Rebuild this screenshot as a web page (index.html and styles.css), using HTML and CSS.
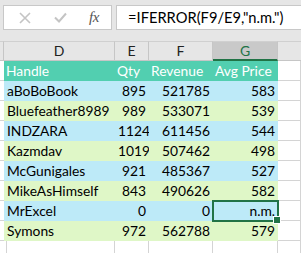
FILE: index.html
```html
<!DOCTYPE html>
<html>
<head>
<meta charset="utf-8">
<link rel="stylesheet" href="styles.css">
</head>
<body>
<div class="fbar">
  <div class="tools">
    <svg class="ico" width="12" height="12" viewBox="0 0 12 12"><path d="M1 1 L11 11 M11 1 L1 11" stroke="#c4c4c4" stroke-width="1.6" fill="none"/></svg>
    <svg class="ico" width="13" height="11" viewBox="0 0 13 11"><path d="M1 5.5 L5 9.5 L12 1.5" stroke="#c4c4c4" stroke-width="2" fill="none"/></svg>
    <span class="fx">fx</span>
  </div>
  <div class="formula">=IFERROR(F9/E9,"n.m.")</div>
</div>
<div class="sheet">
  <div class="ch edge"></div><div class="ch">D</div><div class="ch">E</div><div class="ch">F</div><div class="ch sel">G</div><div class="ch last"></div>

  <div class="c edge"></div><div class="c th">Handle</div><div class="c th">Qty</div><div class="c th">Revenue</div><div class="c th">Avg Price</div><div class="c"></div>

  <div class="c edge"></div><div class="c b">aBoBoBook</div><div class="c b n">895</div><div class="c b n">521785</div><div class="c b n">583</div><div class="c"></div>
  <div class="c edge"></div><div class="c g">Bluefeather8989</div><div class="c g n">989</div><div class="c g n">533071</div><div class="c g n">539</div><div class="c"></div>
  <div class="c edge"></div><div class="c b">INDZARA</div><div class="c b n">1124</div><div class="c b n">611456</div><div class="c b n">544</div><div class="c"></div>
  <div class="c edge"></div><div class="c g">Kazmdav</div><div class="c g n">1019</div><div class="c g n">507462</div><div class="c g n">498</div><div class="c"></div>
  <div class="c edge"></div><div class="c b">McGunigales</div><div class="c b n">921</div><div class="c b n">485367</div><div class="c b n">527</div><div class="c"></div>
  <div class="c edge"></div><div class="c g">MikeAsHimself</div><div class="c g n">843</div><div class="c g n">490626</div><div class="c g n">582</div><div class="c"></div>
  <div class="c edge"></div><div class="c b">MrExcel</div><div class="c b n">0</div><div class="c b n">0</div><div class="c b n active">n.m.</div><div class="c"></div>
  <div class="c edge"></div><div class="c g">Symons</div><div class="c g n">972</div><div class="c g n">562788</div><div class="c g n">579</div><div class="c"></div>

  <div class="c edge"></div><div class="c"></div><div class="c"></div><div class="c"></div><div class="c"></div><div class="c"></div>
</div>
</body>
</html>
```

FILE: styles.css
```css
* { box-sizing: border-box; }
html, body { margin: 0; padding: 0; }
body {
  width: 301px;
  height: 253px;
  overflow: hidden;
  background: #e6e6e6;
  font-family: Lato, "Liberation Sans", sans-serif;
}
.fbar {
  display: flex;
  gap: 4px;
  padding: 5px 0 0 3px;
  height: 41px;
}
.tools {
  width: 109px;
  height: 25px;
  background: #fff;
  border: 1px solid #c8c8c8;
  display: flex;
  align-items: center;
  padding-left: 15px;
}
.tools .ico:nth-child(1) { margin-right: 23px; }
.tools .ico:nth-child(2) { margin-right: 22px; }
.fx {
  font-family: "Liberation Serif", serif;
  font-style: italic;
  font-size: 15px;
  color: #555;
  letter-spacing: -0.5px;
}
.formula {
  flex: 1;
  height: 25px;
  background: #fff;
  border: 1px solid #c8c8c8;
  border-right: none;
  font-size: 14.7px;
  line-height: 23px;
  padding-left: 11px;
  color: #000;
}
.sheet {
  display: grid;
  grid-template-columns: 4px 111px 34px 64px 65px 1fr;
  grid-template-rows: repeat(11, 20px);
  background: #fff;
}
.ch {
  background: #e6e6e6;
  border-top: 1px solid #d0d0d0;
  border-right: 1px solid #c6c6c6;
  border-bottom: 1px solid #c6c6c6;
  text-align: center;
  font-size: 14px;
  line-height: 18px;
  color: #222;
}
.ch.last { border-right: none; }
.ch.sel {
  background: #c9c9c9;
  color: #217346;
  border-bottom: 2px solid #217346;
}
.c {
  border-right: 1px solid #d4d4d4;
  border-bottom: 1px solid #d4d4d4;
  font-size: 13.8px;
  line-height: 20px;
  padding: 0 3px;
  white-space: nowrap;
  color: #000;
  position: relative;
}
.th {
  background: #52cfb0;
  color: #fff;
  border-color: #52cfb0;
  padding-left: 2px;
}
.b { background: #bdeaf8; border-color: #bdeaf8; }
.g { background: #dff7c7; border-color: #dff7c7; }
.n { text-align: right; padding-right: 2px; }
.active {
  outline: 2px solid #217346;
  outline-offset: -1px;
  z-index: 2;
}
.active::after {
  content: "";
  position: absolute;
  right: -4px;
  bottom: -4px;
  width: 6px;
  height: 6px;
  background: #217346;
  border: 1px solid #fff;
}
```
